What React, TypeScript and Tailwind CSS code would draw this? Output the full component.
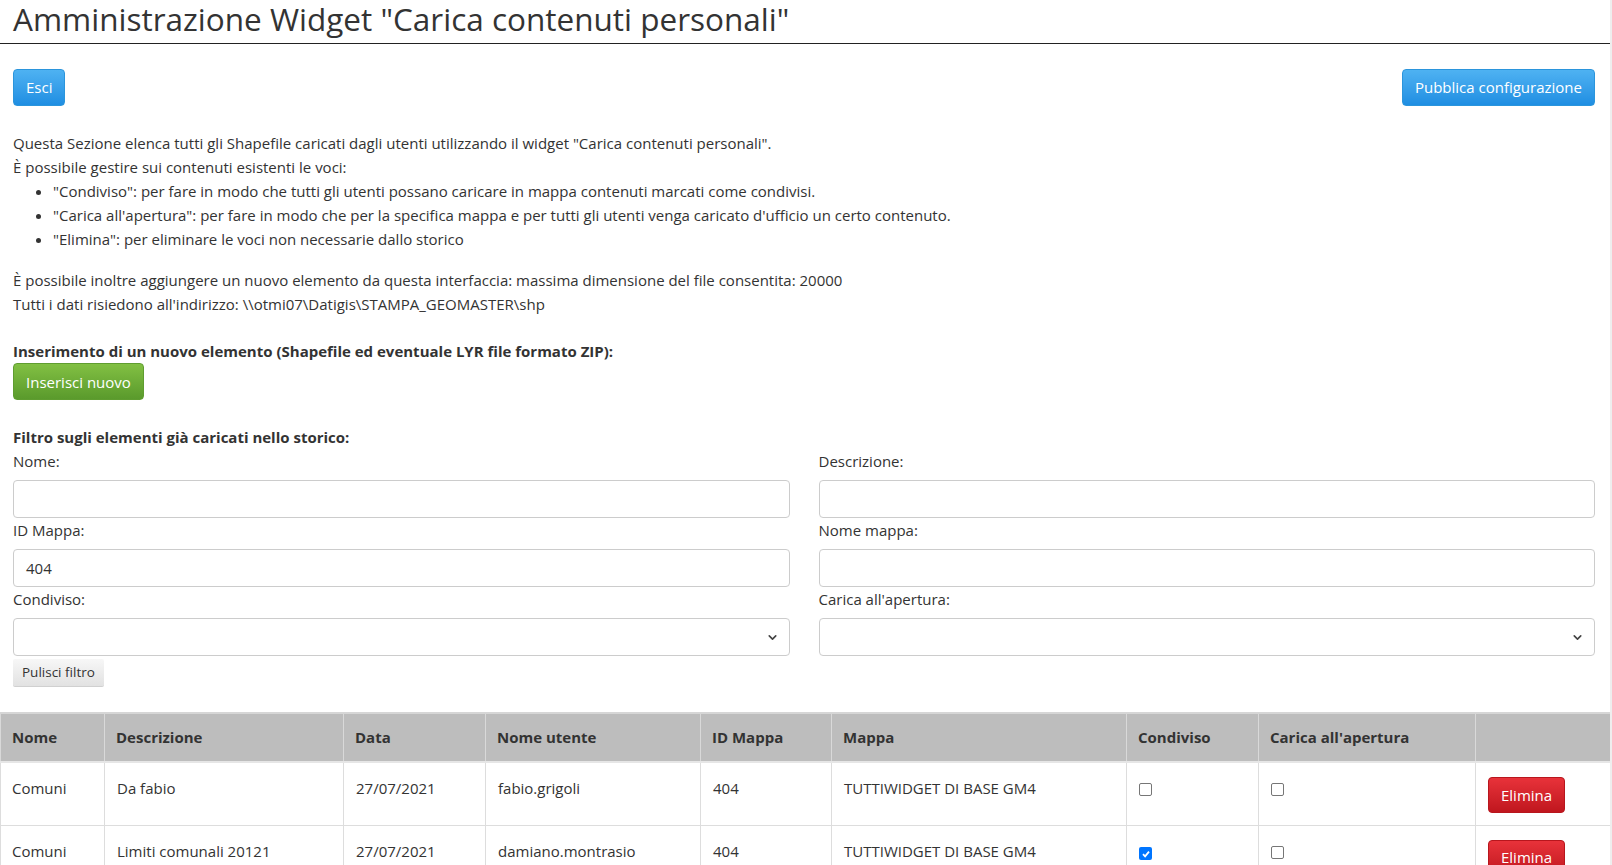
import { ChevronDown } from 'lucide-react';

const rows = [
    { nome: 'Comuni', descrizione: 'Da fabio', data: '27/07/2021', utente: 'fabio.grigoli', idMappa: '404', mappa: 'TUTTIWIDGET DI BASE GM4', condiviso: false, carica: false },
    { nome: 'Comuni', descrizione: 'Limiti comunali 20121', data: '27/07/2021', utente: 'damiano.montrasio', idMappa: '404', mappa: 'TUTTIWIDGET DI BASE GM4', condiviso: true, carica: false },
];

const cols = [
    { label: 'Nome', w: 'w-[104px]' },
    { label: 'Descrizione', w: 'w-[239px]' },
    { label: 'Data', w: 'w-[142px]' },
    { label: 'Nome utente', w: 'w-[215px]' },
    { label: 'ID Mappa', w: 'w-[131px]' },
    { label: 'Mappa', w: 'w-[295px]' },
    { label: 'Condiviso', w: 'w-[132px]' },
    { label: "Carica all'apertura", w: 'w-[217px]' },
    { label: '', w: 'w-[135px]' },
];

function TextField({ label, value }: { label: string; value?: string }) {
    return (
        <div>
            <div className="h-[24px] leading-[24px] mb-[7px]">{label}</div>
            <div className="h-[38px] border border-[#cccccc] rounded-[4px] bg-white px-[12px] leading-[36px]">{value}</div>
        </div>
    );
}

function SelectField({ label }: { label: string }) {
    return (
        <div>
            <div className="h-[24px] leading-[24px] mb-[7px]">{label}</div>
            <div className="h-[38px] border border-[#cccccc] rounded-[4px] bg-white pr-[10px] flex items-center justify-end">
                <ChevronDown size={13} strokeWidth={3} className="text-[#444]" />
            </div>
        </div>
    );
}

function Check({ checked }: { checked: boolean }) {
    return checked ? (
        <span className="inline-flex w-[13px] h-[13px] rounded-[2px] bg-[#0075ff] items-center justify-center">
            <svg width="10" height="10" viewBox="0 0 10 10">
                <path d="M2 5.2 L4.1 7.3 L8 2.6" fill="none" stroke="white" strokeWidth="1.8" />
            </svg>
        </span>
    ) : (
        <span className="inline-block w-[13px] h-[13px] rounded-[2px] border border-[#767676] bg-white" />
    );
}

export default function App() {
    return (
        <div className="min-h-screen bg-white text-[#333333] font-['Open_Sans',sans-serif] text-[15px] flex">
            <div className="w-[1610px]">
                <h1 className="h-[44px] border-b border-[#222] pl-[13px] text-[31.5px] leading-[38px] text-[#333]">
                    Amministrazione Widget "Carica contenuti personali"
                </h1>

                <div className="px-[13px]">
                    <div className="flex justify-between mt-[25px]">
                        <button className="h-[37px] px-[12px] rounded-[4px] text-white bg-gradient-to-b from-[#4eb2f2] to-[#1e8ee2] border border-[#2b95dc]">Esci</button>
                        <button className="h-[37px] px-[12px] mr-[2px] rounded-[4px] text-white bg-gradient-to-b from-[#4eb2f2] to-[#1e8ee2] border border-[#2b95dc]">Pubblica configurazione</button>
                    </div>

                    <div className="mt-[25px] leading-[24px]">
                        <p>Questa Sezione elenca tutti gli Shapefile caricati dagli utenti utilizzando il widget "Carica contenuti personali".</p>
                        <p>È possibile gestire sui contenuti esistenti le voci:</p>
                        <ul className="list-disc pl-[40px]">
                            <li>"Condiviso": per fare in modo che tutti gli utenti possano caricare in mappa contenuti marcati come condivisi.</li>
                            <li>"Carica all'apertura": per fare in modo che per la specifica mappa e per tutti gli utenti venga caricato d'ufficio un certo contenuto.</li>
                            <li>"Elimina": per eliminare le voci non necessarie dallo storico</li>
                        </ul>
                        <p className="mt-[17px]">È possibile inoltre aggiungere un nuovo elemento da questa interfaccia: massima dimensione del file consentita: 20000</p>
                        <p>Tutti i dati risiedono all'indirizzo: \\otmi07\Datigis\STAMPA_GEOMASTER\shp</p>

                        <p className="mt-[23px] font-bold">Inserimento di un nuovo elemento (Shapefile ed eventuale LYR file formato ZIP):</p>
                        <button className="h-[37px] px-[12px] rounded-[4px] text-white bg-gradient-to-b from-[#82c043] to-[#5a9a2c] border border-[#5f9d30]">Inserisci nuovo</button>

                        <p className="mt-[25px] font-bold">Filtro sugli elementi già caricati nello storico:</p>
                    </div>

                    <div className="grid grid-cols-2 gap-x-[29px] pr-[2px]">
                        <TextField label="Nome:" />
                        <TextField label="Descrizione:" />
                        <TextField label="ID Mappa:" value="404" />
                        <TextField label="Nome mappa:" />
                        <SelectField label="Condiviso:" />
                        <SelectField label="Carica all'apertura:" />
                    </div>

                    <button className="mt-[3px] h-[28px] px-[9px] rounded-[2px] text-[13.5px] bg-gradient-to-b from-[#f7f7f7] to-[#e2e2e2] border-b border-[#d0d0d0]">Pulisci filtro</button>
                </div>

                <table className="mt-[25px] w-full border-collapse table-fixed">
                    <thead>
                        <tr className="bg-[#bdbdbd] border-t-2 border-[#d6d6d6]">
                            {cols.map((c, i) => (
                                <th key={i} className={`${c.w} h-[49px] text-left font-bold px-[11px] border-x border-[#d9d9d9] border-b-2 border-b-[#e6e6e6]`}>{c.label}</th>
                            ))}
                        </tr>
                    </thead>
                    <tbody>
                        {rows.map((r, i) => (
                            <tr key={i} className="border-b border-[#dddddd] align-top">
                                <td className="px-[11px] pt-[14px] h-[63px] border-x border-[#dddddd]">{r.nome}</td>
                                <td className="px-[12px] pt-[14px] border-x border-[#dddddd]">{r.descrizione}</td>
                                <td className="px-[12px] pt-[14px] border-x border-[#dddddd]">{r.data}</td>
                                <td className="px-[12px] pt-[14px] border-x border-[#dddddd]">{r.utente}</td>
                                <td className="px-[12px] pt-[14px] border-x border-[#dddddd]">{r.idMappa}</td>
                                <td className="px-[12px] pt-[14px] border-x border-[#dddddd]">{r.mappa}</td>
                                <td className="px-[12px] pt-[16px] border-x border-[#dddddd]"><Check checked={r.condiviso} /></td>
                                <td className="px-[12px] pt-[16px] border-x border-[#dddddd]"><Check checked={r.carica} /></td>
                                <td className="px-[12px] pt-[14px] border-x border-[#dddddd]">
                                    <button className="h-[36px] px-[12px] rounded-[4px] text-white bg-gradient-to-b from-[#e8323a] to-[#c0161e] border border-[#b8161d]">Elimina</button>
                                </td>
                            </tr>
                        ))}
                    </tbody>
                </table>
            </div>
            <div className="w-[2px] bg-[#eeeeee]" />
        </div>
    );
}
